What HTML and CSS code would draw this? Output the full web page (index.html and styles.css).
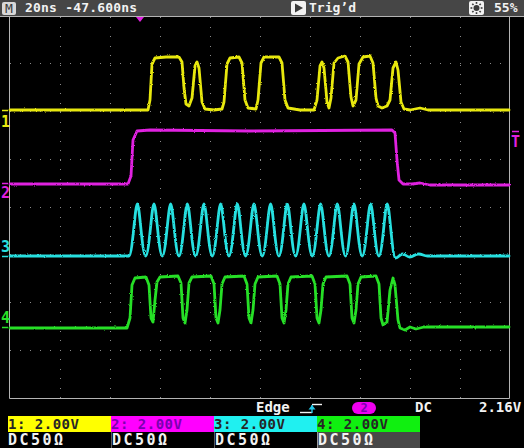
FILE: index.html
```html
<!DOCTYPE html>
<html>
<head>
    <meta charset="utf-8">
    <link rel="stylesheet" href="styles.css">
</head>
<body>
    <div class="top">
        <span class="mode">M</span>
        <span class="tbase">20ns -47.600ns</span>
        <span class="state">
            <svg class="ico" width="15" height="14" viewBox="0 0 15 14">
                <rect x="0" y="0" width="15" height="14" rx="2" fill="#f2f2f2"/>
                <polygon points="4,2.5 12,7 4,11.5" fill="#3a3a3a"/>
            </svg>Trig’d
        </span>
        <span class="bright">
            <svg class="ico" width="15" height="14" viewBox="0 0 15 14">
                <rect x="0" y="0" width="15" height="14" rx="2" fill="#f2f2f2"/>
                <circle cx="7.5" cy="7" r="3" fill="#3a3a3a"/>
                <g stroke="#3a3a3a" stroke-width="1.6">
                    <line x1="7.5" y1="1" x2="7.5" y2="2.8"/>
                    <line x1="7.5" y1="11.2" x2="7.5" y2="13"/>
                    <line x1="1.5" y1="7" x2="3.3" y2="7"/>
                    <line x1="11.7" y1="7" x2="13.5" y2="7"/>
                    <line x1="3.3" y1="2.8" x2="4.5" y2="4"/>
                    <line x1="10.5" y1="10" x2="11.7" y2="11.2"/>
                    <line x1="11.7" y1="2.8" x2="10.5" y2="4"/>
                    <line x1="4.5" y1="10" x2="3.3" y2="11.2"/>
                </g>
            </svg>55%
        </span>
    </div>

    <svg class="screen" width="524" height="382" viewBox="0 17 524 382">
        <defs>
            <filter id="fuzz" x="-2%" y="-10%" width="104%" height="120%">
                <feTurbulence type="fractalNoise" baseFrequency="0.9" numOctaves="1" seed="4"/>
                <feDisplacementMap in="SourceGraphic" scale="2.4" xChannelSelector="R" yChannelSelector="G"/>
            </filter>
        </defs>

        <!-- graticule -->
        <g class="grid-v">
            <line x1="60.5" y1="17" x2="60.5" y2="398"/>
            <line x1="110.5" y1="17" x2="110.5" y2="398"/>
            <line x1="160.5" y1="17" x2="160.5" y2="398"/>
            <line x1="210.5" y1="17" x2="210.5" y2="398"/>
            <line x1="260.5" y1="17" x2="260.5" y2="398"/>
            <line x1="310.5" y1="17" x2="310.5" y2="398"/>
            <line x1="360.5" y1="17" x2="360.5" y2="398"/>
            <line x1="410.5" y1="17" x2="410.5" y2="398"/>
            <line x1="460.5" y1="17" x2="460.5" y2="398"/>
        </g>
        <g class="grid-h">
            <line x1="10" y1="63.5" x2="509" y2="63.5"/>
            <line x1="10" y1="111.5" x2="509" y2="111.5"/>
            <line x1="10" y1="159.5" x2="509" y2="159.5"/>
            <line x1="10" y1="207.5" x2="509" y2="207.5"/>
            <line x1="10" y1="254.5" x2="509" y2="254.5"/>
            <line x1="10" y1="302.5" x2="509" y2="302.5"/>
            <line x1="10" y1="350.5" x2="509" y2="350.5"/>
        </g>
        <path class="frame" d="M9.5,17 V398.5 H509.5 V17"/>

        <!-- trigger position -->
        <polygon points="136,17 144,17 140,22" fill="#e020e0"/>

        <!-- traces -->
        <g class="traces" filter="url(#fuzz)">
            <path class="w1" d="M10,110 H148 L150,100 L152,64 L155,58 L166,57 L179,57 L182,62 L184,88 L186,104 L189,106 L192,98 L195,66 L197,62 L199,68 L202,102 L205,109 L214,110 L222,109 L224,102 L227,64 L230,58 L239,57 L242,63 L245,100 L248,108 L256,109 L258,100 L261,63 L264,57 L279,57 L282,63 L285,100 L288,108 L300,110 L314,110 L317,100 L320,66 L322,62 L324,68 L327,102 L329,108 L331,98 L334,63 L338,58 L345,56 L348,62 L351,97 L353,106 L356,100 L359,64 L363,57 L370,56 L373,63 L376,98 L378,106 L382,108 L387,106 L390,100 L393,68 L396,62 L398,70 L401,102 L404,109 L410,110 L420,108 L428,110 H509"/>
            <path class="w2" d="M10,184 H128 L131,176 L133,140 L137,131 L150,130 L250,131 L392,130 L395,133 L397,160 L399,180 L403,184 L412,184 L420,183 L430,185 H509"/>
            <path class="w3" d="M10,256 H129
                c3.5,0 6,-52 8.33,-52 c2.33,0 4.83,52 8.33,52
                c3.5,0 6,-52 8.33,-52 c2.33,0 4.83,52 8.33,52
                c3.5,0 6,-52 8.33,-52 c2.33,0 4.83,52 8.33,52
                c3.5,0 6,-52 8.33,-52 c2.33,0 4.83,52 8.33,52
                c3.5,0 6,-52 8.33,-52 c2.33,0 4.83,52 8.33,52
                c3.5,0 6,-52 8.33,-52 c2.33,0 4.83,52 8.33,52
                c3.5,0 6,-52 8.33,-52 c2.33,0 4.83,52 8.33,52
                c3.5,0 6,-52 8.33,-52 c2.33,0 4.83,52 8.33,52
                c3.5,0 6,-52 8.33,-52 c2.33,0 4.83,52 8.33,52
                c3.5,0 6,-52 8.33,-52 c2.33,0 4.83,52 8.33,52
                c3.5,0 6,-52 8.33,-52 c2.33,0 4.83,52 8.33,52
                c3.5,0 6,-52 8.33,-52 c2.33,0 4.83,52 8.33,52
                c3.5,0 6,-52 8.33,-52 c2.33,0 4.83,52 8.33,52
                c3.5,0 6,-52 8.33,-52 c2.33,0 4.83,52 8.33,52
                c3.5,0 6,-52 8.33,-52 c2.33,0 4.83,52 8.33,52
                c3.5,0 6,-52 8.33,-52 c2.33,0 4.83,54 8.33,54
                c3,0 4,-4 7,-4 c3,0 4,3 7,3 c4,0 5,-3 9,-3 c4,0 5,2 9,2 H509"/>
            <path class="w4" d="M10,328 H127 L130,318 L132,285 L135,278 L146,277 L149,285 L151,318 L153,322 L155,300 L157,282 L160,277 L178,276 L181,283 L183,318 L185,323 L187,310 L189,283 L192,277 L211,276 L214,284 L216,318 L218,323 L220,310 L222,284 L225,277 L244,276 L247,284 L249,318 L251,323 L253,310 L255,284 L258,277 L277,276 L280,284 L282,318 L284,323 L286,310 L288,284 L291,277 L312,276 L315,284 L317,318 L319,323 L321,310 L323,284 L326,277 L347,276 L350,284 L352,318 L354,323 L356,310 L358,284 L361,277 L376,276 L379,284 L381,318 L383,325 L387,322 L390,290 L393,278 L395,285 L398,320 L400,328 L405,330 L410,327 L416,329 L424,327 H509"/>
        </g>

        <!-- channel markers -->
        <line class="m1" x1="2" y1="110.5" x2="8" y2="110.5"/>
        <text class="lbl t1" x="1" y="127">1</text>
        <line class="m2" x1="2" y1="183.5" x2="8" y2="183.5"/>
        <text class="lbl t2" x="1" y="198">2</text>
        <line class="m3" x1="2" y1="256.5" x2="8" y2="256.5"/>
        <text class="lbl t3" x="1" y="252">3</text>
        <line class="m4" x1="2" y1="327.5" x2="8" y2="327.5"/>
        <text class="lbl t4" x="1" y="323">4</text>

        <!-- trigger level -->
        <line class="m2" x1="512" y1="131.5" x2="519" y2="131.5"/>
        <text class="lbl t2" x="511" y="147">T</text>
    </svg>

    <div class="trig">
        <span></span>
        <span>Edge</span>
        <svg class="edge" width="24" height="14" viewBox="0 0 24 14">
            <polyline points="0,11.5 12,11.5" stroke="#f2f2f2" stroke-width="1.4" fill="none"/>
            <polyline points="12,3.5 22,3.5" stroke="#f2f2f2" stroke-width="1.4" fill="none"/>
            <line x1="12" y1="4" x2="12" y2="12" stroke="#22c8e8" stroke-width="1.4"/>
            <polygon points="12,4 8.5,8.5 15.5,8.5" fill="#22c8e8"/>
        </svg>
        <span class="pill">2</span>
        <span>DC</span>
        <span>2.16V</span>
    </div>

    <div class="chans">
        <div class="ch c1"><div class="scale">1: 2.00V</div><div class="coup">DC50Ω</div></div>
        <div class="ch c2"><div class="scale">2: 2.00V</div><div class="coup">DC50Ω</div></div>
        <div class="ch c3"><div class="scale">3: 2.00V</div><div class="coup">DC50Ω</div></div>
        <div class="ch c4"><div class="scale">4: 2.00V</div><div class="coup">DC50Ω</div></div>
    </div>
</body>
</html>
```

FILE: styles.css
```css
body{
    margin: 0;
    width: 524px;
    height: 448px;
    overflow: hidden;
    background: #000;
    color: #f2f2f2;
    font-family: "DejaVu Sans Mono", "Liberation Mono", monospace;
    font-weight: bold;
}

/* status bar on top */
.top{
    display: grid;
    grid-template-columns: 25px 266px 178px 1fr;
    align-items: center;
    height: 16px;
    background: #464646;
    border-bottom: 1px solid #b4b4b4;
    font-size: 13px;
    line-height: 16px;
}
.mode{
    margin-left: 2px;
    width: 14px;
    height: 13px;
    background: #d8d8d8;
    color: #3a3a3a;
    border-radius: 2px;
    font-size: 13px;
    font-weight: normal;
    line-height: 13px;
    text-align: center;
}
.tbase{
    white-space: pre;
    letter-spacing: 0.2px;
}
.state, .bright{
    display: flex;
    align-items: center;
}
.state .ico{
    margin-right: 3px;
}
.bright .ico{
    margin-right: 10px;
}

/* scope screen */
.screen{
    display: block;
}
.grid-v line{
    stroke: #8a8a8a;
    stroke-width: 1;
    stroke-dasharray: 1 8.5;
    shape-rendering: crispEdges;
}
.grid-h line{
    stroke: #8a8a8a;
    stroke-width: 1;
    stroke-dasharray: 1 9;
    shape-rendering: crispEdges;
}
.frame{
    fill: none;
    stroke: #b4b4b4;
    stroke-width: 1;
}
.traces path{
    fill: none;
    stroke-width: 2.8;
    stroke-linejoin: round;
    stroke-linecap: round;
}
.w1{ stroke: #e8e810; }
.w2{ stroke: #e020e0; }
.w3{ stroke: #28e0e0; }
.w4{ stroke: #28e028; }
.m1, .m2, .m3, .m4{
    stroke-width: 1.5;
}
.m1{ stroke: #e8e810; }
.m2{ stroke: #e020e0; }
.m3{ stroke: #28e0e0; }
.m4{ stroke: #28e028; }
.lbl{
    font-family: "DejaVu Sans Mono", monospace;
    font-weight: bold;
    font-size: 15px;
}
.t1{ fill: #e8e810; }
.t2{ fill: #e020e0; }
.t3{ fill: #28e0e0; }
.t4{ fill: #28e028; }

/* trigger bar */
.trig{
    display: grid;
    grid-template-columns: 256px 44px 52px 63px 64px 1fr;
    align-items: center;
    height: 17px;
    font-size: 14px;
    line-height: 17px;
}
.edge{
    display: block;
}
.pill{
    width: 24px;
    height: 12px;
    border-radius: 6px;
    background: #f000f0;
    color: #7a00b0;
    font-size: 12px;
    line-height: 12px;
    text-align: center;
}

/* channel boxes */
.chans{
    display: grid;
    grid-template-columns: repeat(4, 103px);
    margin-left: 8px;
}
.scale{
    height: 16px;
    font-size: 14px;
    line-height: 16px;
    letter-spacing: 0.5px;
    color: #262626;
    white-space: pre;
}
.coup{
    height: 16px;
    font-size: 15px;
    line-height: 16px;
    letter-spacing: 2.5px;
    border-left: 1px solid #5a5a5a;
}
.c1 .coup{ border-left: none; }
.c1 .scale{ background: #ffff00; }
.c2 .scale{ background: #ff00ff; color: #7a00b0; }
.c3 .scale{ background: #20f0f0; }
.c4 .scale{ background: #10f010; }
.c4 .coup{ background: #484848; border-left-color: #9a9a9a; }
```
